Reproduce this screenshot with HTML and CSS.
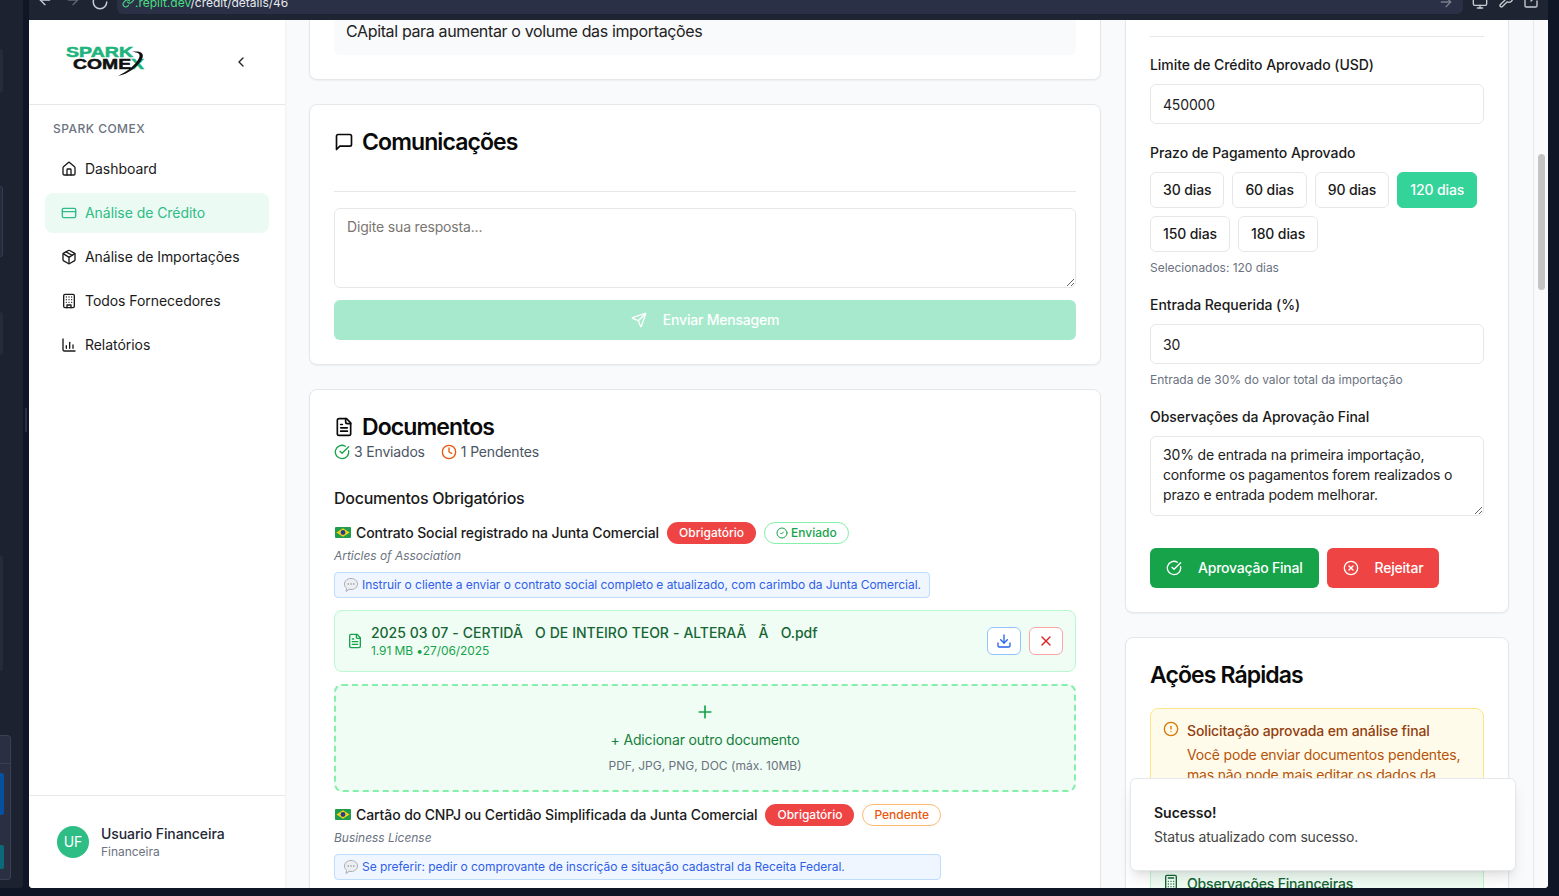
FILE: index.html
```html
<!DOCTYPE html>
<html lang="pt-BR">
<head>
  <meta charset="UTF-8" />
  <meta name="viewport" content="width=device-width, initial-scale=1.0"/>
  <title>Spark Comex - Análise de Crédito</title>
  <link rel="stylesheet" href="styles.css">
</head>
<body>

  <!-- icones -->
  <svg class="sprite" xmlns="http://www.w3.org/2000/svg">
    <symbol id="i-home" viewBox="0 0 24 24"><path d="M15 21v-8a1 1 0 0 0-1-1h-4a1 1 0 0 0-1 1v8"/><path d="M3 10a2 2 0 0 1 .709-1.528l7-5.999a2 2 0 0 1 2.582 0l7 5.999A2 2 0 0 1 21 10v9a2 2 0 0 1-2 2H5a2 2 0 0 1-2-2z"/></symbol>
    <symbol id="i-card" viewBox="0 0 24 24"><rect x="2" y="5" width="20" height="14" rx="2"/><line x1="2" y1="10" x2="22" y2="10"/></symbol>
    <symbol id="i-package" viewBox="0 0 24 24"><path d="M11 21.73a2 2 0 0 0 2 0l7-4A2 2 0 0 0 21 16V8a2 2 0 0 0-1-1.73l-7-4a2 2 0 0 0-2 0l-7 4A2 2 0 0 0 3 8v8a2 2 0 0 0 1 1.73z"/><path d="M12 22V12"/><path d="m3.3 7 7.703 4.734a2 2 0 0 0 1.994 0L20.7 7"/><path d="m7.5 4.27 9 5.15"/></symbol>
    <symbol id="i-building" viewBox="0 0 24 24"><rect x="4" y="2" width="16" height="20" rx="2"/><path d="M9 22v-4h6v4"/><path d="M8 6h.01M16 6h.01M12 6h.01M12 10h.01M12 14h.01M16 10h.01M16 14h.01M8 10h.01M8 14h.01"/></symbol>
    <symbol id="i-chart" viewBox="0 0 24 24"><path d="M3 3v16a2 2 0 0 0 2 2h16"/><path d="M8 17v-4"/><path d="M13 17V8"/><path d="M18 17v-5"/></symbol>
    <symbol id="i-chevron" viewBox="0 0 24 24"><path d="m15 18-6-6 6-6"/></symbol>
    <symbol id="i-message" viewBox="0 0 24 24"><path d="M21 15a2 2 0 0 1-2 2H7l-4 4V5a2 2 0 0 1 2-2h14a2 2 0 0 1 2 2z"/></symbol>
    <symbol id="i-send" viewBox="0 0 24 24"><path d="M14.536 21.686a.5.5 0 0 0 .937-.024l6.5-19a.496.496 0 0 0-.635-.635l-19 6.5a.5.5 0 0 0-.024.937l7.93 3.18a2 2 0 0 1 1.112 1.11z"/><path d="m21.854 2.147-10.94 10.939"/></symbol>
    <symbol id="i-file" viewBox="0 0 24 24"><path d="M15 2H6a2 2 0 0 0-2 2v16a2 2 0 0 0 2 2h12a2 2 0 0 0 2-2V7Z"/><path d="M14 2v4a2 2 0 0 0 2 2h4"/><path d="M10 9H8"/><path d="M16 13H8"/><path d="M16 17H8"/></symbol>
    <symbol id="i-check" viewBox="0 0 24 24"><path d="M21.801 10A10 10 0 1 1 17 3.335"/><path d="m9 11 3 3L22 4"/></symbol>
    <symbol id="i-check-small" viewBox="0 0 24 24"><circle cx="12" cy="12" r="10"/><path d="m9 12 2 2 4-4"/></symbol>
    <symbol id="i-clock" viewBox="0 0 24 24"><circle cx="12" cy="12" r="10"/><polyline points="12 6 12 12 16 14"/></symbol>
    <symbol id="i-circle-x" viewBox="0 0 24 24"><circle cx="12" cy="12" r="10"/><path d="m15 9-6 6"/><path d="m9 9 6 6"/></symbol>
    <symbol id="i-alert" viewBox="0 0 24 24"><circle cx="12" cy="12" r="10"/><line x1="12" y1="8" x2="12" y2="12"/><line x1="12" y1="16" x2="12.01" y2="16"/></symbol>
    <symbol id="i-download" viewBox="0 0 24 24"><path d="M21 15v4a2 2 0 0 1-2 2H5a2 2 0 0 1-2-2v-4"/><polyline points="7 10 12 15 17 10"/><line x1="12" y1="15" x2="12" y2="3"/></symbol>
    <symbol id="i-x" viewBox="0 0 24 24"><path d="M18 6 6 18"/><path d="m6 6 12 12"/></symbol>
    <symbol id="i-plus" viewBox="0 0 24 24"><path d="M5 12h14"/><path d="M12 5v14"/></symbol>
    <symbol id="i-calc" viewBox="0 0 24 24"><rect x="4" y="2" width="16" height="20" rx="2"/><path d="M8 6h8M8 11h.01M12 11h.01M16 11h.01M8 15h.01M12 15h.01M16 15h.01M8 19h.01M12 19h.01M16 19h.01"/></symbol>
    <symbol id="i-link" viewBox="0 0 24 24"><path d="M10 13a5 5 0 0 0 7.54.54l3-3a5 5 0 0 0-7.07-7.07l-1.72 1.71"/><path d="M14 11a5 5 0 0 0-7.54-.54l-3 3a5 5 0 0 0 7.07 7.07l1.71-1.71"/></symbol>
    <symbol id="i-back" viewBox="0 0 24 24"><path d="m12 19-7-7 7-7"/><path d="M19 12H5"/></symbol>
    <symbol id="i-forward" viewBox="0 0 24 24"><path d="M5 12h14"/><path d="m12 5 7 7-7 7"/></symbol>
    <symbol id="i-reload" viewBox="0 0 24 24"><path d="M21 12a9 9 0 1 1-9-9c2.52 0 4.93 1 6.74 2.74L21 8"/><path d="M21 3v5h-5"/></symbol>
    <symbol id="i-monitor" viewBox="0 0 24 24"><rect x="2" y="3" width="20" height="14" rx="2"/><line x1="8" y1="21" x2="16" y2="21"/><line x1="12" y1="17" x2="12" y2="21"/></symbol>
    <symbol id="i-wrench" viewBox="0 0 24 24"><path d="M14.7 6.3a1 1 0 0 0 0 1.4l1.6 1.6a1 1 0 0 0 1.4 0l3.77-3.77a6 6 0 0 1-7.94 7.94l-6.91 6.91a2.12 2.12 0 0 1-3-3l6.91-6.91a6 6 0 0 1 7.94-7.94l-3.76 3.76z"/></symbol>
    <symbol id="i-open" viewBox="0 0 24 24"><path d="M12 3H5a2 2 0 0 0-2 2v14a2 2 0 0 0 2 2h14a2 2 0 0 0 2-2v-7"/><path d="M21 3l-9 9"/><path d="M15 3h6v6"/></symbol>
    <symbol id="i-flag" viewBox="0 0 16 11"><rect width="16" height="11" rx="1" fill="#1f9d4d"/><path d="M8 1.2 14.6 5.5 8 9.8 1.4 5.5z" fill="#f7d117"/><circle cx="8" cy="5.5" r="2.4" fill="#23408f"/></symbol>
    <symbol id="i-bubble" viewBox="0 0 16 16"><path d="M8 1.5c3.7 0 6.5 2.4 6.5 5.5S11.700 12.500 8 12.500c-.7 0-1.300-.1-1.900-.2L3 14.500l.6-3.200C2.300 10.300 1.500 8.800 1.500 7 1.500 3.900 4.300 1.500 8 1.500z" fill="#eceef1" stroke="#a9adb4" stroke-width="1"/><path d="M5.200 7h.01M8 7h.01M10.800 7h.01" stroke="#7b8088" stroke-width="1.400" stroke-linecap="round"/></symbol>
  </svg>

  <!-- parte do editor que aparece na esquerda -->
  <aside class="rail">
    <span class="rail-block rail-block-a"></span>
    <span class="rail-block rail-block-b"></span>
    <span class="rail-block rail-block-c"></span>
    <span class="rail-block rail-block-d"></span>
    <div class="rail-panel">
      <span class="rail-panel-head"></span>
      <span class="rail-blue"></span>
      <span class="rail-teal"></span>
    </div>
    <span class="rail-handle"></span>
  </aside>

  <div class="desk">
    <div class="toolbar">
      <svg class="icon nav-a"><use href="#i-back"/></svg>
      <svg class="icon nav-b"><use href="#i-forward"/></svg>
      <svg class="icon nav-c"><use href="#i-reload"/></svg>
      <div class="urlbar">
        <svg class="icon url-link"><use href="#i-link"/></svg>
        <span class="url-text"><span class="url-host">.replit.dev</span>/credit/details/46</span>
        <svg class="icon url-go"><use href="#i-forward"/></svg>
      </div>
      <svg class="icon tool-a"><use href="#i-monitor"/></svg>
      <svg class="icon tool-b"><use href="#i-wrench"/></svg>
      <svg class="icon tool-c"><use href="#i-open"/></svg>
    </div>

    <div class="app">
      <nav class="sidebar">
        <div class="brand">
          <svg class="logo" viewBox="0 0 80 32">
            <text class="logo-spark" x="0" y="11" textLength="67" lengthAdjust="spacingAndGlyphs">SPARK</text>
            <text class="logo-comex" x="7" y="23" textLength="71" lengthAdjust="spacingAndGlyphs">COME<tspan class="logo-x">X</tspan></text>
            <path d="M66 6C74 4.500 79 7 76 13 72 21 62 28 52 30 60 26 70 19 73 12 75 8 72 6 66 6Z" fill="#111"/>
          </svg>
          <svg class="icon i16 collapse"><use href="#i-chevron"/></svg>
        </div>
        <div class="menu">
          <div class="menu-label">SPARK COMEX</div>
          <a class="menu-item"><svg class="icon i16"><use href="#i-home"/></svg>Dashboard</a>
          <a class="menu-item active"><svg class="icon i16"><use href="#i-card"/></svg>Análise de Crédito</a>
          <a class="menu-item"><svg class="icon i16"><use href="#i-package"/></svg>Análise de Importações</a>
          <a class="menu-item"><svg class="icon i16"><use href="#i-building"/></svg>Todos Fornecedores</a>
          <a class="menu-item"><svg class="icon i16"><use href="#i-chart"/></svg>Relatórios</a>
        </div>
        <div class="user">
          <div class="avatar">UF</div>
          <div class="user-text">
            <div class="user-name">Usuario Financeira</div>
            <div class="user-role">Financeira</div>
          </div>
        </div>
      </nav>

      <main class="content">
        <div class="col-left">
          <section class="card card-first">
            <div class="purpose">CApital para aumentar o volume das importações</div>
          </section>

          <section class="card">
            <h2 class="card-title"><svg class="icon i20"><use href="#i-message"/></svg>Comunicações</h2>
            <div class="divider divider-chat"></div>
            <textarea class="field chat-box" placeholder="Digite sua resposta..."></textarea>
            <button class="btn btn-send"><svg class="icon i16"><use href="#i-send"/></svg>Enviar Mensagem</button>
          </section>

          <section class="card">
            <h2 class="card-title"><svg class="icon i20"><use href="#i-file"/></svg>Documentos</h2>
            <div class="doc-stats">
              <span class="stat"><svg class="icon i16 green"><use href="#i-check"/></svg>3 Enviados</span>
              <span class="stat"><svg class="icon i16 orange"><use href="#i-clock"/></svg>1 Pendentes</span>
            </div>
            <h3 class="doc-group">Documentos Obrigatórios</h3>

            <div class="doc-head">
              <div class="doc-row">
                <svg class="flag"><use href="#i-flag"/></svg>
                <span class="doc-name">Contrato Social registrado na Junta Comercial</span>
                <span class="badge badge-red">Obrigatório</span>
                <span class="badge badge-sent"><svg class="icon i12"><use href="#i-check-small"/></svg>Enviado</span>
              </div>
              <div class="doc-sub">Articles of Association</div>
              <div class="doc-note"><svg class="bubble"><use href="#i-bubble"/></svg>Instruir o cliente a enviar o contrato social completo e atualizado, com carimbo da Junta Comercial.</div>
            </div>

            <div class="file-row">
              <svg class="icon i16 green"><use href="#i-file"/></svg>
              <div class="file-info">
                <div class="file-name">2025 03 07 - CERTIDÃ&nbsp;&nbsp;&nbsp;O DE INTEIRO TEOR - ALTERAÃ&nbsp;&nbsp;&nbsp;Ã&nbsp;&nbsp;&nbsp;O.pdf</div>
                <div class="file-meta">1.91 MB •27/06/2025</div>
              </div>
              <button class="file-btn file-btn-blue"><svg class="icon i16"><use href="#i-download"/></svg></button>
              <button class="file-btn file-btn-red"><svg class="icon i16"><use href="#i-x"/></svg></button>
            </div>

            <div class="dropzone">
              <svg class="icon i20 green"><use href="#i-plus"/></svg>
              <div class="drop-title">+ Adicionar outro documento</div>
              <div class="drop-hint">PDF, JPG, PNG, DOC (máx. 10MB)</div>
            </div>

            <div class="doc-head doc-head-next">
              <div class="doc-row">
                <svg class="flag"><use href="#i-flag"/></svg>
                <span class="doc-name">Cartão do CNPJ ou Certidão Simplificada da Junta Comercial</span>
                <span class="badge badge-red">Obrigatório</span>
                <span class="badge badge-pending">Pendente</span>
              </div>
              <div class="doc-sub">Business License</div>
              <div class="doc-note"><svg class="bubble"><use href="#i-bubble"/></svg>Se preferir: pedir o comprovante de inscrição e situação cadastral da Receita Federal.</div>
            </div>
          </section>
        </div>

        <div class="col-right">
          <section class="card card-approval">
            <div class="divider divider-form"></div>
            <label class="form-label">Limite de Crédito Aprovado (USD)</label>
            <input class="field field-input" value="450000">

            <label class="form-label form-gap">Prazo de Pagamento Aprovado</label>
            <div class="terms">
              <span class="term">30 dias</span>
              <span class="term">60 dias</span>
              <span class="term">90 dias</span>
              <span class="term term-on">120 dias</span>
              <span class="term">150 dias</span>
              <span class="term">180 dias</span>
            </div>
            <div class="form-hint">Selecionados: 120 dias</div>

            <label class="form-label form-gap">Entrada Requerida (%)</label>
            <input class="field field-input" value="30">
            <div class="form-hint">Entrada de 30% do valor total da importação</div>

            <label class="form-label form-gap">Observações da Aprovação Final</label>
            <textarea class="field notes-box">30% de entrada na primeira importação, conforme os pagamentos forem realizados o prazo e entrada podem melhorar.</textarea>

            <div class="form-actions">
              <button class="btn btn-approve"><svg class="icon i16"><use href="#i-check"/></svg>Aprovação Final</button>
              <button class="btn btn-reject"><svg class="icon i16"><use href="#i-circle-x"/></svg>Rejeitar</button>
            </div>
          </section>

          <section class="card">
            <h2 class="card-title">Ações Rápidas</h2>
            <div class="alert">
              <svg class="icon i16"><use href="#i-alert"/></svg>
              <div>
                <div class="alert-title">Solicitação aprovada em análise final</div>
                <div class="alert-body">Você pode enviar documentos pendentes, mas não pode mais editar os dados da solicitação.</div>
              </div>
            </div>
            <div class="finance-box">
              <svg class="icon i16"><use href="#i-calc"/></svg>
              <span>Observações Financeiras</span>
            </div>
          </section>
        </div>

        <div class="scrollbar"><span class="scroll-thumb"></span></div>
      </main>
    </div>
  </div>

  <div class="toast">
    <div class="toast-title">Sucesso!</div>
    <div class="toast-text">Status atualizado com sucesso.</div>
  </div>

</body>
</html>
```

FILE: styles.css
```css
:root {
  --primary-color: #34d399;
  --dark-color: #0f1626;
  --border-color: #e5e7eb;
}
* {
  box-sizing: border-box;
}
body {
  font-family: Inter, "Noto Sans", sans-serif;
  font-size: 14px;
  line-height: 20px;
  letter-spacing: -.17px;
  color: #1a1a1a;
  margin: 0;
  height: 896px;
  overflow: hidden;
  background-color: var(--dark-color);
  display: flex;
}
.sprite {
  display: none;
}
.icon {
  fill: none;
  stroke: currentColor;
  stroke-width: 2;
  stroke-linecap: round;
  stroke-linejoin: round;
  flex-shrink: 0;
}
.i12 { width: 12px; height: 12px; }
.i16 { width: 16px; height: 16px; }
.i20 { width: 20px; height: 20px; }
.green { color: #16a34a; }
.orange { color: #ea580c; }

/* lateral escura */
.rail {
  width: 29px;
  flex-shrink: 0;
  position: relative;
}
.rail::before {
  content: "";
  position: absolute;
  inset: 0 6px 8px 0;
  background-color: #1c2230;
  border-radius: 0 0 4px 0;
}
.rail-block {
  position: absolute;
  left: 0;
  width: 3px;
  background-color: #252b3b;
  border-radius: 0 3px 3px 0;
}
.rail-block-a { top: 49px; height: 44px; }
.rail-block-b { top: 186px; height: 71px; border: 1px solid #333a52; border-left: 0; }
.rail-block-c { top: 312px; height: 43px; }
.rail-block-d { top: 555px; height: 116px; }
.rail-panel {
  position: absolute;
  left: 0;
  top: 735px;
  width: 11px;
  height: 145px;
  background-color: #2a3042;
  border: 1px solid #3a4154;
  border-left: 0;
  border-radius: 0 4px 4px 0;
}
.rail-panel-head {
  display: block;
  height: 28px;
  border-bottom: 1px solid #3a4154;
}
.rail-blue {
  display: block;
  width: 4px;
  height: 42px;
  margin-top: 9px;
  background-color: #0550a0;
  border-radius: 0 2px 2px 0;
}
.rail-teal {
  display: block;
  width: 4px;
  height: 24px;
  margin-top: 30px;
  background-color: #0a6a78;
  border-radius: 0 2px 2px 0;
}
.rail-handle {
  position: absolute;
  left: 25px;
  top: 408px;
  width: 2px;
  height: 24px;
  background-color: #2a3042;
}

/* barra do navegador */
.desk {
  width: 1519px;
  display: flex;
  flex-direction: column;
}
.toolbar {
  height: 20px;
  flex-shrink: 0;
  background-color: #1f2433;
  display: flex;
  overflow: hidden;
  color: #c9ccd3;
}
.toolbar .icon {
  width: 16px;
  height: 16px;
  margin-top: -8px;
}
.nav-a { margin-left: 8px; }
.nav-b { margin-left: 12px; opacity: .4; }
.toolbar .nav-c {
  margin-left: 10px;
  width: 18px;
  height: 18px;
  margin-top: -7px;
}
.urlbar {
  width: 1346px;
  height: 14px;
  margin-left: 8px;
  padding: 0 5px;
  background-color: #2a3045;
  border-radius: 0 0 6px 6px;
  display: flex;
  align-items: flex-start;
}
.toolbar .url-link {
  width: 13px;
  height: 13px;
  margin-top: -5px;
  color: #4ade80;
}
.url-text {
  margin-left: 0;
  margin-top: -7px;
  font-size: 12px;
  letter-spacing: 0;
  color: #e8eaee;
}
.url-host {
  color: #4ade80;
}
.toolbar .url-go {
  margin-left: auto;
  margin-right: 4px;
  margin-top: -6px;
  opacity: .5;
}
.toolbar .tool-a { margin-left: 9px; margin-top: -6px; }
.toolbar .tool-b { margin-left: 10px; margin-top: -7px; }
.toolbar .tool-c { margin-left: 9px; margin-top: -7px; }

/* aplicacao */
.app {
  height: 868px;
  display: flex;
  background-color: #f9fafb;
  border-radius: 0 0 4px 4px;
  overflow: hidden;
}
.sidebar {
  width: 256px;
  flex-shrink: 0;
  background-color: white;
  display: flex;
  flex-direction: column;
  box-shadow: 0 1px 3px rgba(0, 0, 0, .08);
  position: relative;
}
.brand {
  height: 85px;
  padding: 0 36px 0 37px;
  border-bottom: 1px solid var(--border-color);
  display: flex;
  align-items: center;
  justify-content: space-between;
}
.logo {
  width: 80px;
  height: 32px;
  overflow: visible;
}
.logo-spark, .logo-comex {
  font-family: "Liberation Sans", sans-serif;
  font-weight: 700;
  font-size: 14px;
  letter-spacing: 0;
  stroke-width: .5px;
}
.logo-spark {
  fill: #20b47c;
  stroke: #20b47c;
}
.logo-comex {
  fill: #111;
  stroke: #111;
}
.logo-x {
  fill: #20b47c;
  stroke: #20b47c;
}
.collapse {
  color: #222;
}
.menu {
  padding: 16px;
}
.menu-label {
  font-size: 12px;
  line-height: 16px;
  font-weight: 500;
  letter-spacing: .04em;
  color: #6b7280;
  padding-left: 8px;
  margin-bottom: 12px;
}
.menu-item {
  height: 40px;
  padding: 0 16px;
  margin-bottom: 4px;
  border-radius: 8px;
  display: flex;
  align-items: center;
  gap: 8px;
  letter-spacing: -.05px;
  color: #1a1a1a;
}
.menu-item.active {
  background-color: #ecfaf4;
  color: #2dbd85;
}
.user {
  margin-top: auto;
  height: 93px;
  padding: 0 28px;
  border-top: 1px solid var(--border-color);
  display: flex;
  align-items: center;
  gap: 12px;
}
.avatar {
  width: 32px;
  height: 32px;
  border-radius: 50%;
  background-color: #2dbd85;
  color: white;
  letter-spacing: 0;
  display: flex;
  align-items: center;
  justify-content: center;
}
.user-text {
  padding-top: 2px;
}
.user-name {
  color: #1f2937;
  line-height: 18px;
  font-weight: 500;
  letter-spacing: -.1px;
}
.user-role {
  color: #6b7280;
  font-size: 12px;
  line-height: 18px;
  letter-spacing: -.03px;
}

/* conteudo */
.content {
  flex: 1;
  padding-left: 24px;
  display: flex;
  gap: 24px;
  align-items: flex-start;
  overflow: hidden;
}
.col-left {
  width: 792px;
  flex-shrink: 0;
  display: flex;
  flex-direction: column;
  gap: 24px;
  margin-top: -38px;
}
.col-right {
  width: 384px;
  flex-shrink: 0;
  display: flex;
  flex-direction: column;
  gap: 24px;
  margin-top: -9px;
}
.card {
  background-color: white;
  border: 1px solid var(--border-color);
  border-radius: 8px;
  padding: 24px;
  box-shadow: 0 1px 2px rgba(0, 0, 0, .05);
}
.purpose {
  background-color: #f9fafb;
  border-radius: 6px;
  padding: 12px;
  font-size: 16px;
  line-height: 24px;
  letter-spacing: -.36px;
  color: #222;
}
.card-title {
  margin: 0 0 2px;
  font-size: 23px;
  line-height: 26px;
  font-weight: 600;
  letter-spacing: -.9px;
  color: #0a0a0a;
  display: flex;
  align-items: center;
  gap: 8px;
}
.divider {
  height: 1px;
  background-color: var(--border-color);
}
.divider-chat {
  margin-top: 36px;
  margin-bottom: 16px;
}
.divider-form {
  margin-bottom: 18px;
}
.field {
  display: block;
  width: 100%;
  padding: 8px 12px;
  border: 1px solid var(--border-color);
  border-radius: 6px;
  background-color: white;
  font-family: inherit;
  font-size: 14px;
  line-height: 20px;
  letter-spacing: -.17px;
  color: #222;
}
.field::placeholder {
  color: #7a7672;
}
.field-input {
  height: 40px;
}
.chat-box, .notes-box {
  height: 80px;
}
.btn {
  height: 40px;
  padding: 0 16px 1px;
  border: none;
  border-radius: 6px;
  color: white;
  font-family: inherit;
  font-size: 14px;
  font-weight: 500;
  letter-spacing: -.22px;
  display: flex;
  align-items: center;
  justify-content: center;
  gap: 16px;
}
.btn-send {
  width: 100%;
  margin-top: 12px;
  background-color: #a7e9cd;
}
.btn-approve {
  background-color: #16a34a;
}
.btn-reject {
  background-color: #ef4444;
}

/* documentos */
.doc-stats {
  margin-top: 2px;
  display: flex;
  gap: 16px;
  color: #4b5563;
}
.stat {
  display: flex;
  align-items: center;
  gap: 4px;
}
.doc-group {
  margin: 24px 0 12px;
  font-size: 16px;
  line-height: 24px;
  font-weight: 500;
  letter-spacing: -.26px;
  color: #1a1a1a;
}
.doc-head {
  width: fit-content;
}
.doc-head-next {
  margin-top: 12px;
}
.doc-row {
  display: flex;
  align-items: center;
  height: 22px;
  gap: 8px;
}
.flag {
  width: 16px;
  height: 11px;
  margin-left: 1px;
  margin-right: -3px;
  margin-top: -2px;
}
.doc-name {
  font-weight: 500;
  letter-spacing: -.1px;
  color: #1a1a1a;
}
.badge {
  height: 22px;
  padding: 0 11px;
  border-radius: 11px;
  font-size: 12px;
  font-weight: 500;
  letter-spacing: 0;
  display: inline-flex;
  align-items: center;
  gap: 3px;
  border: 1px solid transparent;
}
.badge-red {
  background-color: #ef4444;
  color: white;
}
.badge-sent {
  background-color: white;
  border-color: #86efac;
  color: #16a34a;
}
.badge-pending {
  background-color: white;
  border-color: #fdba74;
  color: #ea580c;
}
.doc-sub {
  margin-top: 4px;
  font-size: 12px;
  line-height: 16px;
  letter-spacing: -.03px;
  font-style: italic;
  color: #6b7280;
}
.doc-note {
  margin-top: 8px;
  height: 26px;
  padding: 0 8px;
  background-color: #eff6ff;
  border: 1px solid #bfdbfe;
  border-radius: 4px;
  font-size: 12px;
  letter-spacing: -.04px;
  color: #2f5fe8;
  display: flex;
  align-items: center;
  gap: 3px;
  white-space: nowrap;
}
.bubble {
  width: 16px;
  height: 16px;
  flex-shrink: 0;
}
.file-row {
  margin-top: 12px;
  height: 62px;
  padding: 0 12px;
  background-color: #f0fdf4;
  border: 1px solid #bbf7d0;
  border-radius: 8px;
  display: flex;
  align-items: center;
  gap: 8px;
}
.file-info {
  flex: 1;
}
.file-name {
  font-weight: 500;
  letter-spacing: -.05px;
  word-spacing: .4px;
  color: #166534;
}
.file-meta {
  font-size: 12px;
  line-height: 16px;
  letter-spacing: -.1px;
  color: #16a34a;
}
.file-btn {
  width: 34px;
  height: 28px;
  padding: 0;
  background-color: white;
  border-radius: 6px;
  display: flex;
  align-items: center;
  justify-content: center;
}
.file-btn-blue {
  border: 1px solid #93c5fd;
  color: #2563eb;
}
.file-btn-red {
  border: 1px solid #fca5a5;
  color: #dc2626;
}
.dropzone {
  margin-top: 12px;
  height: 108px;
  background-color: #f0fdf4;
  border: 2px dashed #86efac;
  border-radius: 8px;
  padding-top: 16px;
  display: flex;
  flex-direction: column;
  align-items: center;
}
.drop-title {
  margin-top: 8px;
  color: #15803d;
}
.drop-hint {
  margin-top: 8px;
  font-size: 12px;
  line-height: 16px;
  letter-spacing: 0;
  color: #6b7280;
}

/* coluna direita */
.card-approval {
  padding-bottom: 24px;
}
.form-label {
  display: block;
  font-weight: 500;
  letter-spacing: -.06px;
  color: #1a1a1a;
  margin-bottom: 9px;
}
.form-gap {
  margin-top: 19px;
}
.form-hint {
  margin-top: 8px;
  font-size: 12px;
  line-height: 16px;
  letter-spacing: -.03px;
  color: #6b7280;
}
.terms {
  display: flex;
  flex-wrap: wrap;
  gap: 8px;
}
.term {
  height: 36px;
  padding: 0 12px;
  background-color: white;
  border: 1px solid var(--border-color);
  border-radius: 6px;
  font-weight: 500;
  letter-spacing: -.12px;
  display: flex;
  align-items: center;
}
.term-on {
  background-color: var(--primary-color);
  border-color: var(--primary-color);
  color: white;
}
.form-actions {
  margin-top: 32px;
  display: flex;
  gap: 8px;
}
.alert {
  margin-top: 20px;
  padding: 12px;
  background-color: #fffbeb;
  border: 1px solid #fde68a;
  border-radius: 8px;
  display: flex;
  gap: 8px;
  color: #d97706;
}
.alert-title {
  font-weight: 500;
  letter-spacing: -.13px;
  color: #92400e;
}
.alert-body {
  margin-top: 4px;
  color: #b45309;
}
.finance-box {
  margin-top: 43px;
  height: 60px;
  padding: 12px;
  background-color: #f0fdf4;
  border: 1px solid #bbf7d0;
  border-radius: 8px;
  display: flex;
  gap: 8px;
  color: #166534;
  font-weight: 500;
}
.scrollbar {
  width: 15px;
  height: 100%;
  flex-shrink: 0;
  margin-left: auto;
  padding: 134px 3px 0 4px;
  background-color: #fafafa;
  border-left: 1px solid #e8e8e8;
}
.scroll-thumb {
  display: block;
  height: 136px;
  background-color: #c4c4c4;
  border-radius: 4px;
}

/* aviso */
.toast {
  position: absolute;
  left: 1130px;
  top: 778px;
  width: 386px;
  height: 93px;
  padding: 24px 23px;
  background-color: white;
  border: 1px solid var(--border-color);
  border-radius: 6px;
  box-shadow: 0 10px 15px -3px rgba(0, 0, 0, .1), 0 4px 6px -4px rgba(0, 0, 0, .1);
}
.toast-title {
  font-weight: 600;
  letter-spacing: 0;
  color: #1a1a1a;
}
.toast-text {
  margin-top: 4px;
  color: #444;
}
```
